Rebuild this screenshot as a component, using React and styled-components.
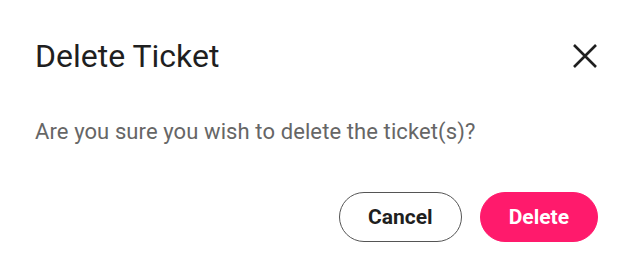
import styled, { createGlobalStyle } from "styled-components";

const Global = createGlobalStyle`
  body {
    margin: 0;
    background: #fff;
    font-family: Roboto, "Liberation Sans", sans-serif;
  }
`;

const Dialog = styled.div`
  width: 632px;
  height: 276px;
  box-sizing: border-box;
  padding: 38px 34px 0 35px;
  display: flex;
  flex-direction: column;
`;

const Header = styled.div`
  display: flex;
  align-items: center;
  justify-content: space-between;
  height: 36px;
`;

const Title = styled.h2`
  margin: 0;
  font-size: 32px;
  font-weight: 400;
  color: #1f1f1f;
`;

const CloseButton = styled.button`
  border: 0;
  background: none;
  padding: 0;
  width: 26px;
  height: 26px;
  display: flex;
  align-items: center;
  justify-content: center;
  cursor: pointer;
`;

const Message = styled.p`
  margin: 44px 0 0;
  font-size: 22px;
  letter-spacing: 0.1px;
  color: #666;
  line-height: 28px;
`;

const Actions = styled.div`
  display: flex;
  justify-content: flex-end;
  gap: 18px;
  margin-top: 46px;
`;

const Button = styled.button`
  height: 50px;
  padding: 0 28px;
  border-radius: 25px;
  font-family: Roboto, "Liberation Sans", sans-serif;
  font-size: 21px;
  font-weight: 700;
  cursor: pointer;
  border: 1px solid ${(p) => (p.$primary ? "#ff1a6c" : "#555")};
  background: ${(p) => (p.$primary ? "#ff1a6c" : "#fff")};
  color: ${(p) => (p.$primary ? "#fff" : "#1f1f1f")};
`;

export default function App() {
  return (
    <>
      <Global />
      <Dialog>
        <Header>
          <Title>Delete Ticket</Title>
          <CloseButton aria-label="Close">
            <svg width="26" height="26" viewBox="0 0 26 26">
              <path d="M2 2 L24 24 M24 2 L2 24" stroke="#1f1f1f" strokeWidth="2.6" />
            </svg>
          </CloseButton>
        </Header>
        <Message>Are you sure you wish to delete the ticket(s)?</Message>
        <Actions>
          <Button>Cancel</Button>
          <Button $primary>Delete</Button>
        </Actions>
      </Dialog>
    </>
  );
}
